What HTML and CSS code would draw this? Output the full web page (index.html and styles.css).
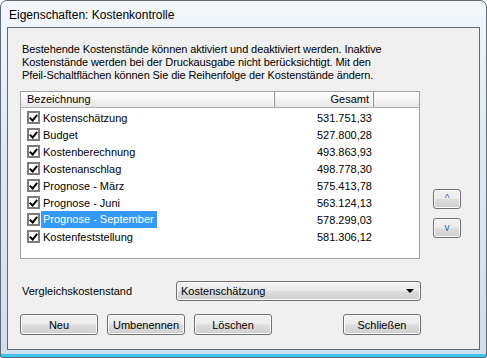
FILE: index.html
```html
<!DOCTYPE html>
<html>
<head>
<meta charset="utf-8">
<link rel="stylesheet" href="styles.css">
</head>
<body>
<div class="window">
  <div class="titlebar">Eigenschaften: Kostenkontrolle</div>
  <div class="client">
    <p class="intro">Bestehende Kostenstände können aktiviert und deaktiviert werden. Inaktive<br>Kostenstände werden bei der Druckausgabe nicht berücksichtigt. Mit den<br>Pfeil-Schaltflächen können Sie die Reihenfolge der Kostenstände ändern.</p>
    <div class="main">
      <div class="list">
        <div class="header">
          <div class="hcell c-name">Bezeichnung</div>
          <div class="hcell c-sum">Gesamt</div>
          <div class="hcell c-rest"></div>
        </div>
        <div class="rows">
          <div class="row"><span class="check"></span><span class="name">Kostenschätzung</span><span class="sum">531.751,33</span></div>
          <div class="row"><span class="check"></span><span class="name">Budget</span><span class="sum">527.800,28</span></div>
          <div class="row"><span class="check"></span><span class="name">Kostenberechnung</span><span class="sum">493.863,93</span></div>
          <div class="row"><span class="check"></span><span class="name">Kostenanschlag</span><span class="sum">498.778,30</span></div>
          <div class="row"><span class="check"></span><span class="name">Prognose - März</span><span class="sum">575.413,78</span></div>
          <div class="row"><span class="check"></span><span class="name">Prognose - Juni</span><span class="sum">563.124,13</span></div>
          <div class="row"><span class="check"></span><span class="name"><span class="sel">Prognose - September</span></span><span class="sum">578.299,03</span></div>
          <div class="row"><span class="check"></span><span class="name">Kostenfeststellung</span><span class="sum">581.306,12</span></div>
        </div>
      </div>
      <div class="side">
        <button class="btn arrow">^</button>
        <button class="btn arrow">v</button>
      </div>
    </div>
    <div class="compare">
      <span class="label">Vergleichskostenstand</span>
      <div class="combo"><span>Kostenschätzung</span><span class="tri"></span></div>
    </div>
    <div class="buttons">
      <button class="btn push">Neu</button>
      <button class="btn push">Umbenennen</button>
      <button class="btn push">Löschen</button>
      <span class="spacer"></span>
      <button class="btn push">Schließen</button>
    </div>
  </div>
</div>
</body>
</html>
```

FILE: styles.css
```css
html, body {
  margin: 0;
  padding: 0;
  background: #ffffff;
}
.window {
  width: 487px;
  height: 358px;
  box-sizing: border-box;
  border: 1px solid #5f6b78;
  border-radius: 7px 7px 2px 2px;
  background: linear-gradient(180deg, #f4f8fb 0%, #dfe9f2 40%, #cfdeec 100%);
  padding: 0 6px 7px 6px;
  display: flex;
  flex-direction: column;
  font-family: "Liberation Sans", Arial, sans-serif;
  box-shadow: inset 0 -3px 0 #3ec3f0;
}
.titlebar {
  height: 26px;
  line-height: 28px;
  padding-left: 2px;
  font-size: 12px;
  color: #000;
}
.client {
  flex: 1;
  border: 1px solid #5c6976;
  background: #f0f0f0;
  padding: 15px 0 0 12px;
  display: flex;
  flex-direction: column;
  font-size: 11px;
  color: #000;
}
.intro {
  margin: 0 0 0 2px;
  line-height: 13px;
  letter-spacing: -0.1px;
}
.main {
  display: flex;
  margin-top: 9px;
}
.list {
  width: 400px;
  height: 168px;
  box-sizing: border-box;
  border: 1px solid #a0a0a0;
  background: #fff;
}
.header {
  display: flex;
  height: 15px;
  background: linear-gradient(180deg, #ffffff 0%, #f3f3f3 60%, #e6e6e6 100%);
  border-bottom: 1px solid #b0b0b0;
}
.hcell {
  box-sizing: border-box;
  line-height: 15px;
  border-right: 1px solid #8f8f8f;
  box-shadow: inset -1px 0 0 #fff;
}
.c-name { width: 254px; padding-left: 6px; }
.c-sum { width: 99px; text-align: right; padding-right: 4px; }
.c-rest { flex: 1; border-right: none; box-shadow: none; }
.rows {
  padding-top: 1px;
}
.row {
  display: flex;
  align-items: center;
  height: 17px;
}
.check {
  width: 13px;
  height: 13px;
  box-sizing: border-box;
  margin-left: 6px;
  border: 2px solid #7c7c7c;
  background: #fff;
  position: relative;
}
.check::after {
  content: "";
  position: absolute;
  left: 2px;
  top: 0px;
  width: 3px;
  height: 6px;
  border: solid #000;
  border-width: 0 2px 2px 0;
  transform: rotate(40deg);
}
.name {
  width: 234px;
  padding-left: 3px;
  white-space: nowrap;
}
.sel {
  display: inline-block;
  background: #3399ff;
  color: #fff;
  line-height: 17px;
  padding: 0 3px 0 2px;
  margin-left: -2px;
}
.sum {
  width: 95px;
  text-align: right;
}
.side {
  display: flex;
  flex-direction: column;
  margin-left: 13px;
  padding-top: 98px;
  gap: 9px;
}
.btn {
  font-family: "Liberation Sans", Arial, sans-serif;
  font-size: 11px;
  color: #000;
  box-sizing: border-box;
  border: 1px solid #707070;
  border-radius: 3px;
  background: linear-gradient(180deg, #f2f2f2 0%, #ebebeb 48%, #dddddd 52%, #cfcfcf 100%);
  box-shadow: inset 0 0 0 1px #fcfcfc;
  padding: 0;
  margin: 0;
}
.arrow {
  width: 28px;
  height: 20px;
  color: #4a6a9a;
  font-size: 10px;
  line-height: 18px;
}
.compare {
  display: flex;
  align-items: center;
  margin-top: 22px;
}
.label {
  width: 154px;
  margin-left: 2px;
}
.combo {
  width: 245px;
  height: 20px;
  box-sizing: border-box;
  border: 1px solid #707070;
  border-radius: 3px;
  background: linear-gradient(180deg, #f2f2f2 0%, #ebebeb 48%, #dddddd 52%, #cfcfcf 100%);
  box-shadow: inset 0 0 0 1px #fcfcfc;
  display: flex;
  align-items: center;
  justify-content: space-between;
  padding: 0 5px 0 4px;
}
.tri {
  width: 0;
  height: 0;
  border-left: 4px solid transparent;
  border-right: 4px solid transparent;
  border-top: 4px solid #000;
  margin-right: 1px;
}
.buttons {
  display: flex;
  margin-top: 13px;
  gap: 9px;
}
.push {
  width: 78px;
  height: 21px;
}
.spacer { flex: 1; }
.buttons .push:last-child { margin-right: 58px; }
```
